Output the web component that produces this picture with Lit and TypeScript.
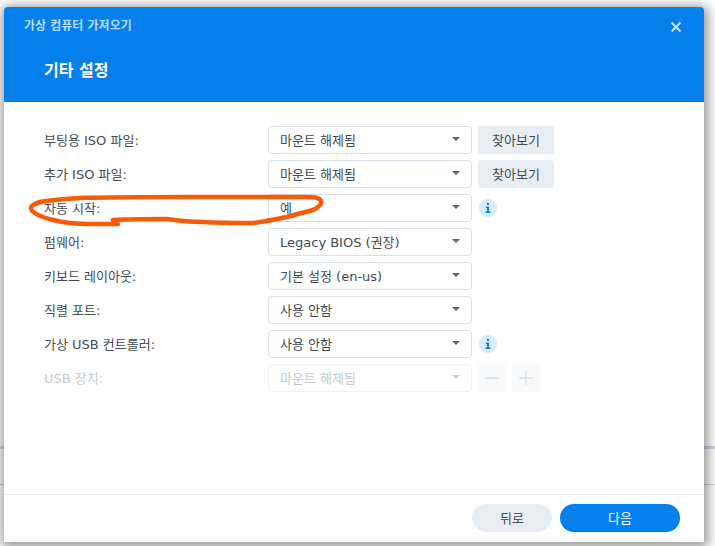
import { LitElement, html, css, svg } from "lit";
import { customElement } from "lit/decorators.js";

interface Row { label: string; value: string; extra?: "browse" | "info" | "addremove"; disabled?: boolean; }

const rows: Row[] = [
  { label: "부팅용 ISO 파일:", value: "마운트 해제됨", extra: "browse" },
  { label: "추가 ISO 파일:", value: "마운트 해제됨", extra: "browse" },
  { label: "자동 시작:", value: "예", extra: "info" },
  { label: "펌웨어:", value: "Legacy BIOS (권장)" },
  { label: "키보드 레이아웃:", value: "기본 설정 (en-us)" },
  { label: "직렬 포트:", value: "사용 안함" },
  { label: "가상 USB 컨트롤러:", value: "사용 안함", extra: "info" },
  { label: "USB 장치:", value: "마운트 해제됨", extra: "addremove", disabled: true },
];

@customElement("app-root")
export class AppRoot extends LitElement {
  static styles = css`
    :host {
      display: block;
      width: 715px;
      height: 546px;
      position: relative;
      overflow: hidden;
      background: #fff;
      font-family: "DejaVu Sans", "Noto Sans CJK KR", sans-serif;
      font-size: 13px;
      color: #414b55;
    }
    .bgline { position: absolute; left: 0; right: 0; height: 1px; background: #ccd5e0; }
    .l1 { top: 446px; height: 3px; }
    .l2 { top: 484px; }
    .page { padding: 7px 11px 4px 4px; height: 100%; box-sizing: border-box; position: relative; }
    .dialog {
      height: 100%;
      display: flex;
      flex-direction: column;
      background: #fff;
      border-radius: 4px 4px 0 0;
      box-shadow: 1px 2px 12px 3px rgba(0, 0, 0, 0.42);
      overflow: hidden;
    }
    .head { height: 95px; background: #057feb; position: relative; box-sizing: border-box; padding: 11px 20px 0; flex: none; }
    .title { font-size: 12px; font-weight: 700; color: #b4dcfb; line-height: 16px; }
    .sub { font-size: 16px; font-weight: 700; color: #fff; line-height: 22px; margin: 26px 0 0 20px; }
    .close { position: absolute; top: 14px; right: 22px; width: 12px; height: 12px; display: block; }
    .body { flex: 1; padding: 24px 40px 0; display: flex; flex-direction: column; gap: 6px; }
    .row { display: flex; align-items: center; height: 28px; }
    .label { width: 224px; flex: none; white-space: nowrap; padding-bottom: 2px; box-sizing: border-box; }
    .row.dis .label { color: #c4c9ce; }
    .select {
      width: 204px; height: 28px; box-sizing: border-box; flex: none;
      border: 1px solid #d7e0ea; border-radius: 4px; background: #fff;
      display: flex; align-items: center; justify-content: space-between;
      padding: 0 11px 2px; white-space: nowrap;
    }
    .row.dis .select { border-color: #eef1f5; color: #c4c9ce; }
    .caret { width: 0; height: 0; border-left: 4.5px solid transparent; border-right: 4.5px solid transparent; border-top: 4px solid #5c646c; }
    .row.dis .caret { border-top-color: #c8ccd0; }
    .btn {
      margin-left: 6px; width: 76px; height: 28px; border-radius: 3px; box-sizing: border-box; padding-bottom: 2px;
      background: #e8edf4; display: flex; align-items: center; justify-content: center;
    }
    .info {
      margin-left: 7px; width: 18px; height: 18px; border-radius: 50%; background: #d9ecff;
      display: flex; align-items: center; justify-content: center; color: #057feb;
    }
    .sq { width: 28px; height: 28px; border-radius: 3px; background: #f9fafc; margin-left: 6px; display: flex; align-items: center; justify-content: center; }
    .foot {
      height: 48px; flex: none; box-sizing: border-box; border-top: 1px solid #e2e9f0; padding: 9px 24px 0 0;
      display: flex; justify-content: flex-end; gap: 8px;
    }
    .pill { height: 28px; border-radius: 14px; display: flex; align-items: center; justify-content: center; box-sizing: border-box; padding-bottom: 2px; }
    .back { width: 80px; background: #e8edf4; }
    .next { width: 120px; background: #057feb; color: #fff; }
    .mark { position: absolute; left: 0; top: 0; pointer-events: none; }
  `;

  private extra(r: Row) {
    if (r.extra === "browse") return html`<div class="btn">찾아보기</div>`;
    if (r.extra === "info")
      return html`<div class="info">
        <svg width="6" height="10" viewBox="0 0 6 10"><path d="M2 0h2v2H2zM1 3.5h3V8.4h1.4V10H.6V8.4H2V5H1z" fill="currentColor"/></svg>
      </div>`;
    if (r.extra === "addremove")
      return html`<div class="sq">
          <svg width="14" height="14" viewBox="0 0 14 14"><path d="M0 6h14v2H0z" fill="#e3e6ea"/></svg>
        </div>
        <div class="sq">
          <svg width="14" height="14" viewBox="0 0 14 14"><path d="M6 0h2v6h6v2H8v6H6V8H0V6h6z" fill="#e3e6ea"/></svg>
        </div>`;
    return null;
  }

  render() {
    return html`
      <div class="bgline l1"></div>
      <div class="bgline l2"></div>
      <div class="page">
        <div class="dialog">
          <div class="head">
            <div class="title">가상 컴퓨터 가져오기</div>
            <div class="sub">기타 설정</div>
            <svg class="close" viewBox="0 0 12 12"><path d="M1.5 1.5l9 9M10.5 1.5l-9 9" stroke="#c4e2fb" stroke-width="2" fill="none"/></svg>
          </div>
          <div class="body">
            ${rows.map(
              (r) => html`<div class="row ${r.disabled ? "dis" : ""}">
                <div class="label">${r.label}</div>
                <div class="select"><span>${r.value}</span><span class="caret"></span></div>
                ${this.extra(r)}
              </div>`
            )}
          </div>
          <div class="foot">
            <div class="pill back">뒤로</div>
            <div class="pill next">다음</div>
          </div>
        </div>
      </div>
      <svg class="mark" width="715" height="546" viewBox="0 0 715 546">
        ${svg`<path d="M40 202 C34 204 30 206 31 209 C33 214 42 217 53 220 C65 223 78 224 90 224 L118 224 L113 220 C130 219 150 219 167 219 C180 221 190 222 203 222 C220 223 238 223 253 223 C265 222 276 219 287 217 C297 214 305 212 313 210 C319 207 322 204 321 201 C320 198 316 197 305 197 C270 197 230 197 187 197 C150 197 115 197 80 198 C65 199 50 200 40 202 Z" fill="none" stroke="#fb5a05" stroke-width="4.5" stroke-linejoin="round"/>`}
      </svg>
    `;
  }
}
